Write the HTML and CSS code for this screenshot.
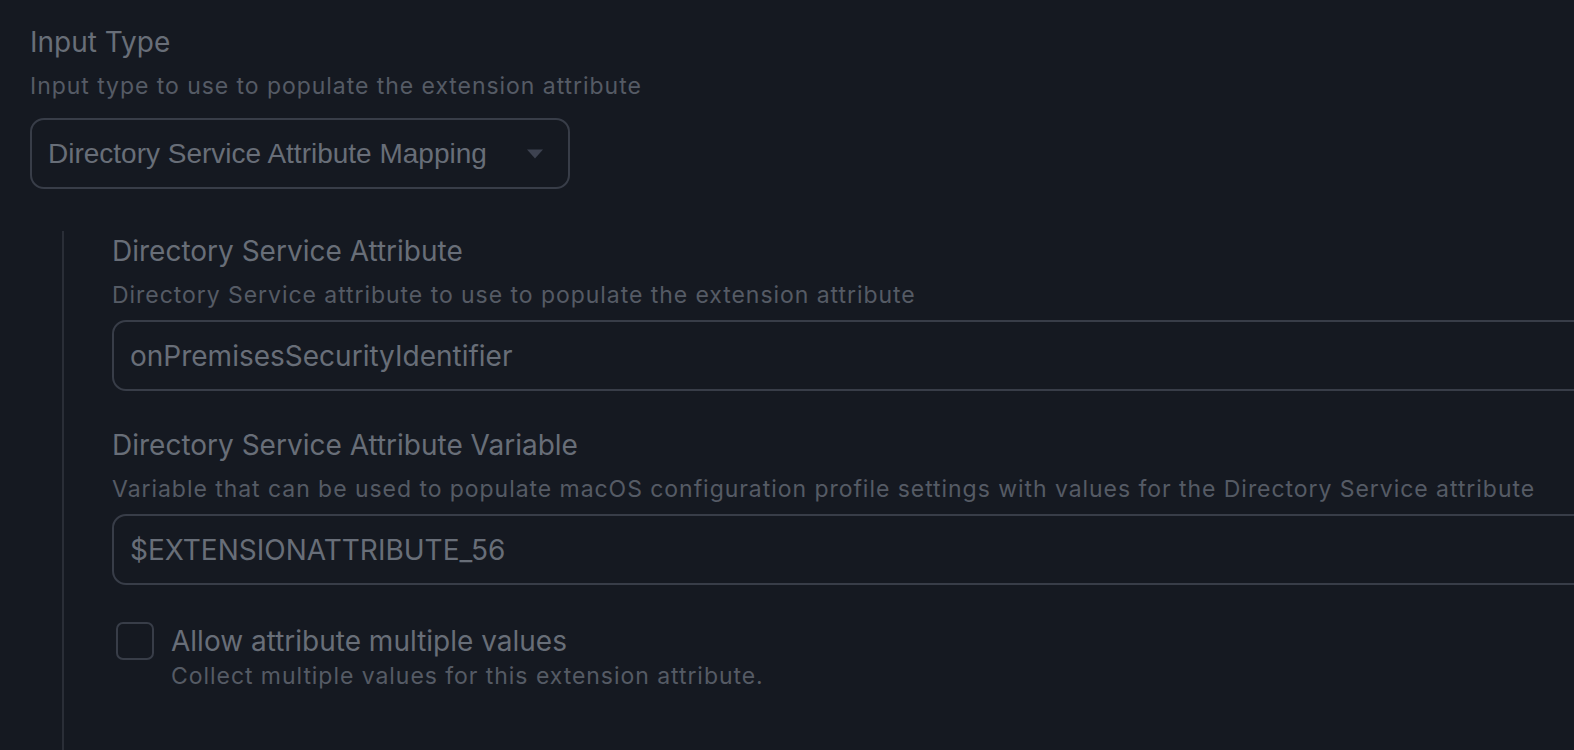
FILE: index.html
```html
<!DOCTYPE html>
<html>
<head>
<meta charset="utf-8">
<link rel="stylesheet" href="styles.css">
</head>
<body>
<div class="page">
  <div class="field">
    <div class="label">Input Type</div>
    <div class="desc">Input type to use to populate the extension attribute</div>
    <div class="select">
      <span class="select-text">Directory Service Attribute Mapping</span>
      <svg class="caret" width="16" height="10" viewBox="0 0 16 10"><path d="M0 0.5h16L8 9.5z" fill="#3d4250"/></svg>
    </div>
  </div>
  <div class="nested">
    <div class="field">
      <div class="label">Directory Service Attribute</div>
      <div class="desc">Directory Service attribute to use to populate the extension attribute</div>
      <div class="input">onPremisesSecurityIdentifier</div>
    </div>
    <div class="field">
      <div class="label">Directory Service Attribute Variable</div>
      <div class="desc">Variable that can be used to populate macOS configuration profile settings with values for the Directory Service attribute</div>
      <div class="input">$EXTENSIONATTRIBUTE_56</div>
    </div>
    <div class="check-row">
      <div class="checkbox"></div>
      <div class="check-text">
        <div class="label">Allow attribute multiple values</div>
        <div class="desc small">Collect multiple values for this extension attribute.</div>
      </div>
    </div>
  </div>
</div>
</body>
</html>
```
FILE: styles.css
```css
html, body {
  margin: 0;
  padding: 0;
  background: #151921;
  overflow: hidden;
  height: 750px;
}
.page {
  padding: 23px 0 0 30px;
  font-family: Inter, "Noto Sans", sans-serif;
}
.label {
  font-size: 28px;
  line-height: 38px;
  color: #686e78;
  white-space: nowrap;
}
.desc {
  font-size: 23px;
  line-height: 32px;
  color: #555b65;
  letter-spacing: 0.95px;
  margin-top: 9px;
  white-space: nowrap;
}
.select {
  margin-top: 16px;
  width: 540px;
  height: 71px;
  box-sizing: border-box;
  border: 2px solid #383d48;
  border-radius: 14px;
  display: flex;
  align-items: center;
  padding: 0 0 0 16px;
}
.select-text {
  font-family: "Liberation Sans", Arial, sans-serif;
  font-size: 28px;
  color: #686e78;
  flex: 1;
}
.caret {
  margin-right: 25px;
}
.nested {
  margin-top: 42px;
  margin-left: 32px;
  border-left: 2px solid #2a2e37;
  padding-left: 48px;
  padding-top: 1px;
  height: 600px;
}
.nested .field + .field {
  margin-top: 35px;
}
.input {
  margin-top: 9px;
  width: 1600px;
  height: 71px;
  box-sizing: border-box;
  border: 2px solid #383d48;
  border-radius: 14px;
  display: flex;
  align-items: center;
  padding-left: 16px;
  font-size: 28px;
  color: #686e78;
}
.check-row {
  display: flex;
  margin-top: 37px;
}
.checkbox {
  width: 38px;
  height: 38px;
  box-sizing: border-box;
  border: 2px solid #383d48;
  border-radius: 7px;
  margin: 0 17px 0 4px;
  flex: none;
}
.desc.small {
  margin-top: 0;
}
```
